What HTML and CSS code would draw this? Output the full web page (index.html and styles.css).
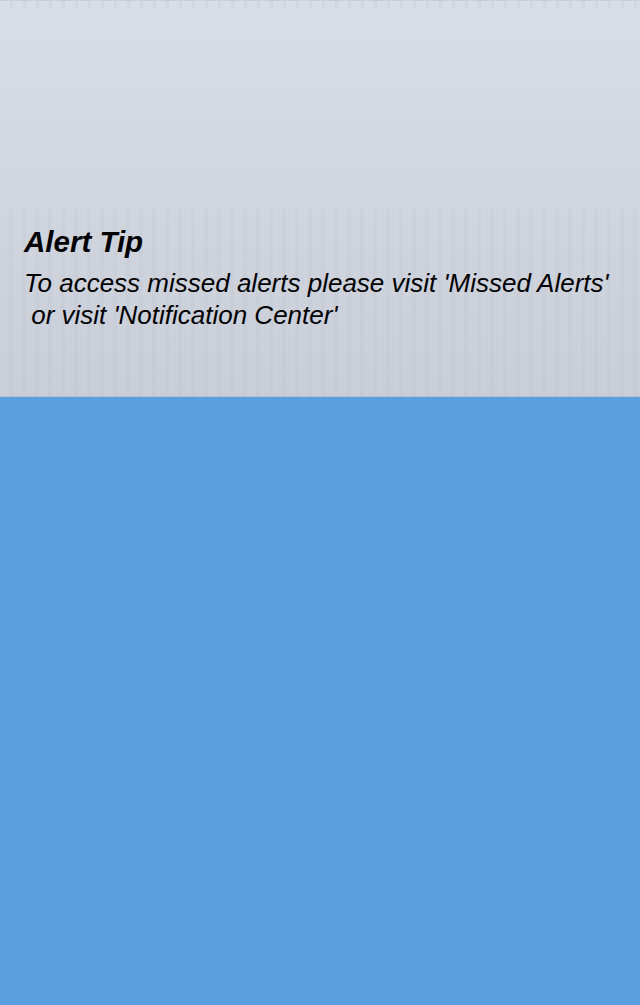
FILE: index.html
```html
<!DOCTYPE html>
<html>
<head>
<meta charset="utf-8">
<link rel="stylesheet" href="styles.css">
</head>
<body>
<div class="screen">
  <div class="header"></div>
  <div class="tip">
    <h1 class="tip-title">Alert Tip</h1>
    <p class="tip-text">To access missed alerts please visit 'Missed Alerts'<br>&nbsp;or visit 'Notification Center'</p>
  </div>
  <div class="content"></div>
</div>
</body>
</html>
```

FILE: styles.css
```css
html, body {
  margin: 0;
  padding: 0;
  height: 100%;
}
body {
  font-family: "Liberation Sans", Arial, sans-serif;
  background: #5a9fe0;
}
.screen {
  display: flex;
  flex-direction: column;
  height: 1005px;
}
.header {
  height: 207px;
  flex: none;
  background:
    repeating-linear-gradient(90deg, rgba(150,160,185,0) 0 10px, rgba(150,160,185,0.12) 10px 13px) top left / 100% 7px no-repeat,
    linear-gradient(180deg, #d9dde6 0%, #d0d5df 100%);
  border-top: 1px solid #c8cdd8;
  box-sizing: border-box;
}
.tip {
  height: 190px;
  flex: none;
  box-sizing: border-box;
  padding: 18px 24px 0 24px;
  background:
    repeating-linear-gradient(90deg, rgba(150,160,185,0) 0 9px, rgba(150,160,185,0.07) 9px 13px),
    linear-gradient(180deg, #d0d5de 0%, #c9ced8 100%);
  border-bottom: 1px solid #b9bec8;
}
.tip-title {
  margin: 0;
  font-size: 29.5px;
  font-weight: bold;
  font-style: italic;
  color: #000;
  line-height: 33px;
}
.tip-text {
  margin: 9px 0 0 0;
  font-size: 26px;
  font-style: italic;
  color: #000;
  line-height: 32px;
}
.content {
  flex: 1;
  background: #5a9fe0;
}
```
